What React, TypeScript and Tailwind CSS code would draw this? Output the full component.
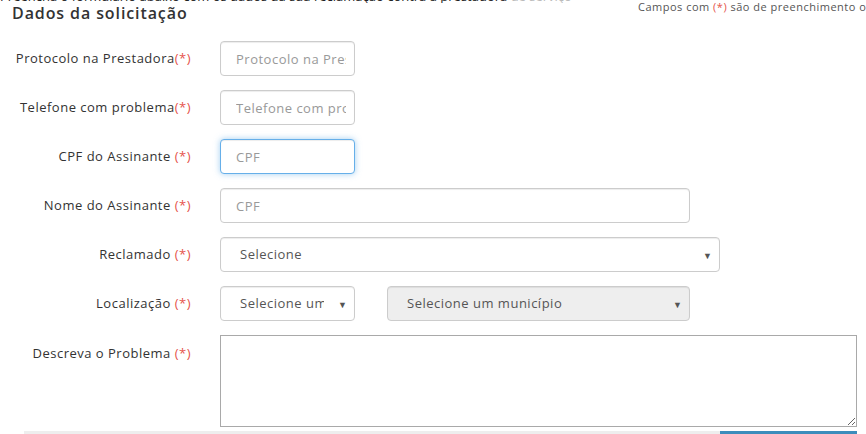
import React from "react";

const font = { fontFamily: '"Open Sans", "Noto Sans", sans-serif' };

const Req = () => <span className="text-[#e5534b]">(*)</span>;

const Arrow = () => (
  <span className="pointer-events-none absolute right-[8px] top-1/2 -translate-y-1/2 text-[9px] leading-none text-[#555]">▼</span>
);

const inputCls =
  "h-[35px] rounded-[4px] border border-[#ccc] bg-white pl-[15px] pr-2 text-[13px] tracking-[0.5px] text-[#555] placeholder:text-[#999] outline-none shadow-[inset_0_1px_1px_rgba(0,0,0,0.075)]";

const Label = ({ children, top }: { children: React.ReactNode; top?: boolean }) => (
  <div className={`flex justify-end text-[13px] tracking-[0.5px] text-[#333] ${top ? "items-start pt-[9px]" : "items-center h-[35px]"}`}>
    <span className="whitespace-nowrap">{children}</span>
  </div>
);

export default function App() {
  return (
    <div className="h-[434px] w-full overflow-hidden bg-white" style={font}>
      {/* header */}
      <div className="flex">
        <div className="flex-1 min-w-0">
          <div className="h-[3px] overflow-hidden">
            <div className="-mt-[10px] whitespace-nowrap text-[13px] leading-[13px] text-[#222]">
              Preencha o formulário abaixo com os dados da sua reclamação contra a prestadora <span className="text-[#bbb]">de serviço</span>
            </div>
          </div>
          <h2 className="pl-[12px] pt-[1px] text-[16px] font-semibold leading-[18px] tracking-[0.9px] text-[#333]">Dados da solicitação</h2>
        </div>
        <div className="w-[228px] shrink-0 overflow-hidden whitespace-nowrap pt-[1px] text-[11px] leading-[12px] tracking-[0.5px] text-[#555]">
          Campos com <Req /> são de preenchimento o
        </div>
      </div>

      {/* form */}
      <div className="mt-[19px] grid grid-cols-[191px_1fr] gap-x-[29px] gap-y-[14px] pr-[9px]">
        <Label>Protocolo na Prestadora<Req /></Label>
        <div>
          <input className={`${inputCls} w-[135px]`} placeholder="Protocolo na Prestadora" />
        </div>

        <Label>Telefone com problema<Req /></Label>
        <div>
          <input className={`${inputCls} w-[135px]`} placeholder="Telefone com problema" />
        </div>

        <Label>CPF do Assinante <Req /></Label>
        <div>
          <input
            className={`${inputCls} w-[135px] !border-[#66afe9] !shadow-[inset_0_1px_1px_rgba(0,0,0,0.075),0_0_6px_rgba(102,175,233,0.6)]`}
            placeholder="CPF"
          />
        </div>

        <Label>Nome do Assinante <Req /></Label>
        <div>
          <input className={`${inputCls} w-[470px]`} placeholder="CPF" />
        </div>

        <Label>Reclamado <Req /></Label>
        <div className="relative w-[500px]">
          <select className={`${inputCls} w-full appearance-none !pl-[19px] !pr-[30px]`} defaultValue="">
            <option value="">Selecione</option>
          </select>
          <Arrow />
        </div>

        <Label>Localização <Req /></Label>
        <div className="flex gap-[32px]">
          <div className="relative w-[135px]">
            <select className={`${inputCls} w-full appearance-none !pl-[19px] !pr-[30px]`} defaultValue="">
              <option value="">Selecione um estado</option>
            </select>
            <Arrow />
          </div>
          <div className="relative w-[303px]">
            <select disabled className={`${inputCls} w-full appearance-none !bg-[#eee] !pl-[19px] !pr-[30px]`} defaultValue="">
              <option value="">Selecione um município</option>
            </select>
            <Arrow />
          </div>
        </div>

        <Label top>Descreva o Problema <Req /></Label>
        <div>
          <textarea className="block h-[92px] w-full border border-[#a9a9a9] bg-white text-[13px] outline-none" />
        </div>
      </div>

      {/* footer */}
      <div className="mt-[4px] flex pl-[24px] pr-[9px]">
        <div className="h-[4px] flex-1 bg-[#eee]" />
        <div className="h-[4px] w-[137px] bg-[#3c8dbc]" />
      </div>
    </div>
  );
}
